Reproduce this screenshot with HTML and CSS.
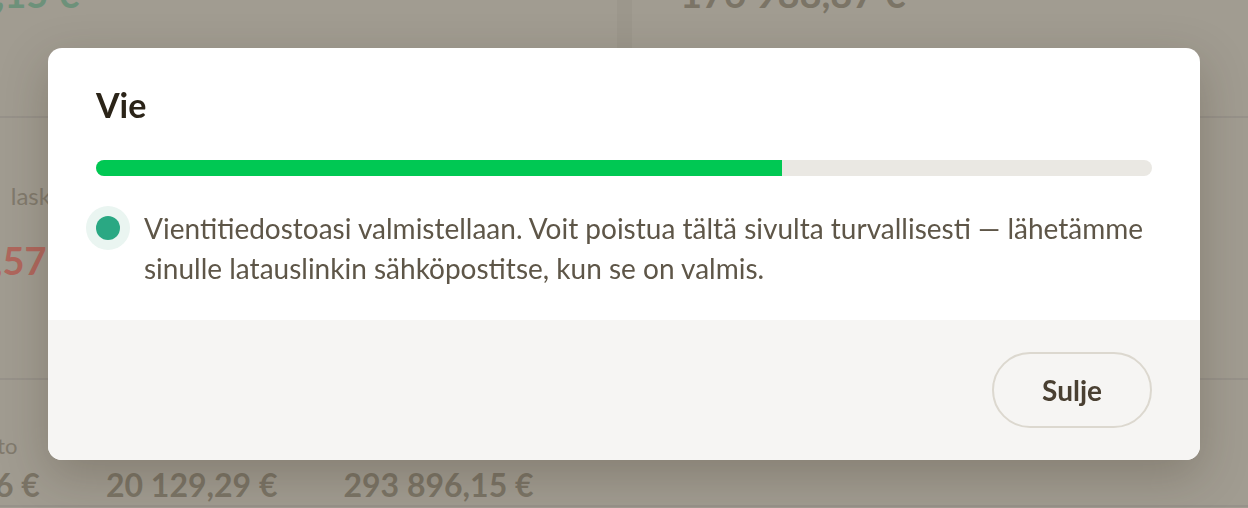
FILE: index.html
```html
<!DOCTYPE html>
<html lang="fi">
<head>
  <meta charset="UTF-8">
  <title>Vie</title>
  <link rel="stylesheet" href="styles.css">
</head>
<body>

  <div class="page">
    <div class="row row-top">
      <div class="card card-left">
        <div class="big green">4 412,15 €</div>
      </div>
      <div class="card card-right">
        <div class="big">176 988,87 €</div>
        <div class="label">Laskutettu</div>
      </div>
    </div>

    <div class="row row-mid">
      <div class="card card-mid">
        <div class="label">Avoimet laskut</div>
        <div class="big red">-2 148,57 €</div>
      </div>
    </div>

    <div class="row row-bottom">
      <div class="card card-bottom">
        <div class="label">Netto</div>
        <div class="values">
          <span class="num">12 406 €</span>
          <span class="num">20 129,29 €</span>
          <span class="num">293 896,15 €</span>
        </div>
      </div>
    </div>
  </div>

  <div class="overlay">
    <div class="modal">
      <div class="modal-body">
        <h2>Vie</h2>
        <div class="progress">
          <div class="progress-fill" style="width: 65%"></div>
        </div>
        <div class="status">
          <span class="status-dot"></span>
          <p>Vientitiedostoasi valmistellaan. Voit poistua tältä sivulta turvallisesti — lähetämme sinulle latauslinkin sähköpostitse, kun se on valmis.</p>
        </div>
      </div>
      <div class="modal-footer">
        <button class="close-btn">Sulje</button>
      </div>
    </div>
  </div>

</body>
</html>
```

FILE: styles.css
```css
* {
  margin: 0;
  padding: 0;
  box-sizing: border-box;
}

body {
  font-family: Lato, 'Noto Sans', sans-serif;
  background: #a19c91;
  color: #7a7365;
  height: 100vh;
  overflow: hidden;
}

/* Dashboard behind the dim layer */
.page {
  margin-top: -30px;
}

.row {
  display: flex;
  border-bottom: 2px solid #97928a;
}

.row-top {
  height: 148px;
}

.row-mid {
  height: 262px;
}

.card {
  flex: 1;
}

.card-left {
  flex: 0 0 632px;
  border-right: 15px solid #9c978c;
}

.card-left .big {
  margin-left: -102px;
}

.card-right {
  padding-left: 48px;
}

.big {
  font-size: 38px;
  font-weight: 700;
  color: #7b7466;
  line-height: 46px;
  white-space: nowrap;
}

.green {
  color: #6d917a;
}

.label {
  font-size: 22px;
  color: #817a6d;
  margin-top: 44px;
  white-space: nowrap;
}

.card-mid .label {
  font-size: 24px;
  word-spacing: 10px;
  margin-top: 63px;
  margin-left: -93px;
}

.red {
  color: #b0675d;
  margin-top: 27px;
  margin-left: -118px;
}

.card-bottom .label {
  margin-top: 52px;
  margin-left: -38px;
}

.values {
  display: flex;
  gap: 66px;
  margin-left: -87px;
  margin-top: 6px;
}

.num {
  font-size: 32px;
  font-weight: 700;
  color: #7b7466;
  line-height: 40px;
  white-space: nowrap;
}

/* Dialog */
.overlay {
  position: fixed;
  inset: 0;
  display: flex;
  justify-content: center;
  align-items: center;
}

.modal {
  width: 1152px;
  height: 412px;
  background: #fff;
  border-radius: 14px;
  overflow: hidden;
  box-shadow: 0 16px 48px rgba(50, 40, 25, 0.25);
  display: flex;
  flex-direction: column;
}

.modal-body {
  height: 272px;
  padding: 37px 48px 0;
}

h2 {
  font-size: 34px;
  font-weight: 700;
  color: #2b2418;
  line-height: 40px;
  margin-bottom: 35px;
}

.progress {
  height: 16px;
  background: #eae8e3;
  border-radius: 8px;
  overflow: hidden;
}

.progress-fill {
  height: 100%;
  background: #00c853;
}

.status {
  display: flex;
  align-items: flex-start;
  gap: 14px;
  margin-top: 32px;
  margin-left: -10px;
}

.status-dot {
  flex: 0 0 auto;
  width: 44px;
  height: 44px;
  margin-top: -2px;
  border-radius: 50%;
  background: #eaf5f1;
  display: flex;
  justify-content: center;
  align-items: center;
}

.status-dot::after {
  content: "";
  width: 24px;
  height: 24px;
  border-radius: 50%;
  background: #2aa883;
}

.status p {
  font-size: 28px;
  line-height: 40px;
  color: #5e5648;
}

.modal-footer {
  flex: 1;
  background: #f6f5f3;
  display: flex;
  justify-content: flex-end;
  align-items: flex-start;
  padding: 32px 48px;
}

.close-btn {
  width: 160px;
  height: 76px;
  border: 2px solid #dcd8cf;
  border-radius: 38px;
  background: transparent;
  font-family: inherit;
  font-size: 28px;
  font-weight: 700;
  color: #4a4032;
  cursor: pointer;
}
```
